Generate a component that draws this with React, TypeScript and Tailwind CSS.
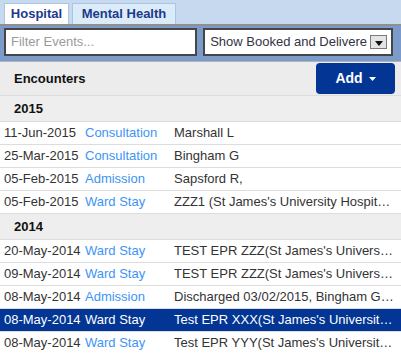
import React from 'react';

type Encounter = {
  date: string;
  type: string;
  detail: string;
  selected?: boolean;
};

const groups: { year: string; rows: Encounter[] }[] = [
  {
    year: '2015',
    rows: [
      { date: '11-Jun-2015', type: 'Consultation', detail: 'Marshall L' },
      { date: '25-Mar-2015', type: 'Consultation', detail: 'Bingham G' },
      { date: '05-Feb-2015', type: 'Admission', detail: 'Sapsford R,' },
      { date: '05-Feb-2015', type: 'Ward Stay', detail: "ZZZ1 (St James's University Hospital), Leeds Teaching Hospitals" },
    ],
  },
  {
    year: '2014',
    rows: [
      { date: '20-May-2014', type: 'Ward Stay', detail: "TEST EPR ZZZ(St James's University Hospital)" },
      { date: '09-May-2014', type: 'Ward Stay', detail: "TEST EPR ZZZ(St James's University Hospital)" },
      { date: '08-May-2014', type: 'Admission', detail: 'Discharged 03/02/2015, Bingham G, Leeds' },
      { date: '08-May-2014', type: 'Ward Stay', detail: "Test EPR XXX(St James's University Hospital)", selected: true },
      { date: '08-May-2014', type: 'Ward Stay', detail: "Test EPR YYY(St James's University Hospital)" },
    ],
  },
];

function Row({ row }: { row: Encounter }) {
  return (
    <div
      className={`grid h-[23px] grid-cols-[81px_89px_1fr] items-center border-b border-[#dddddd] pl-[4px] pr-[7px] text-[13px] ${
        row.selected ? 'bg-[#023594] text-white' : 'bg-white text-[#333333]'
      }`}
    >
      <span>{row.date}</span>
      <span className={row.selected ? 'text-white' : 'text-[#3d94f6]'}>{row.type}</span>
      <span className="truncate">{row.detail}</span>
    </div>
  );
}

export default function App() {
  return (
    <div className="h-[354px] w-[401px] overflow-hidden bg-white font-['Liberation_Sans',Arial,sans-serif]">
      <div className="flex h-[24px] items-end gap-[3px] bg-[#c7d9ee] pl-[4px]">
        <div className="flex h-[21px] w-[65px] items-center justify-center border border-b-0 border-[#a8c5ea] bg-white text-[13px] font-bold text-[#1b3a8c]">
          Hospital
        </div>
        <div className="flex h-[21px] w-[104px] items-center justify-center border border-b-0 border-[#a8c5ea] bg-[#dcebf8] text-[13px] font-bold text-[#1b3a8c]">
          Mental Health
        </div>
      </div>

      <div className="flex h-[37px] gap-[6px] border-t-2 border-[#8f8f8f] bg-[#7b9bcb] px-[4px] pt-[2px]">
        <div className="flex h-[28px] w-[193px] items-center border-2 border-[#464646] bg-white pl-[5px] text-[13px] text-[#9a9a9a]">
          Filter Events...
        </div>
        <div className="flex h-[28px] w-[190px] items-center justify-end gap-[3px] overflow-hidden border-2 border-[#464646] bg-white pr-[4px] text-[13px] text-[#333344]">
          <span className="whitespace-nowrap">Show Booked and Delivere</span>
          <span className="flex h-[14px] w-[17px] shrink-0 items-center justify-center border border-[#7a7a7a] bg-[#e4e4e4]">
            <svg width="8" height="5" viewBox="0 0 8 5" className="mt-[2px]">
              <path d="M0 0h8L4 5z" fill="#111" />
            </svg>
          </span>
        </div>
      </div>

      <div className="flex h-[35px] items-center justify-between border-t border-b border-t-[#b3b3b3] border-b-[#dcdcdc] bg-[#ececec] pl-[14px] pr-[6px]">
        <span className="text-[13px] font-bold text-[#111111]">Encounters</span>
        <button className="flex h-[31px] w-[79px] items-center justify-center gap-[6px] rounded-[4px] bg-[#023594] text-[14px] font-bold text-white">
          Add
          <svg width="7" height="4" viewBox="0 0 7 4">
            <path d="M0 0h7L3.5 4z" fill="#fff" />
          </svg>
        </button>
      </div>

      {groups.map((group) => (
        <div key={group.year}>
          <div className="flex h-[26px] items-center border-b border-[#dddddd] bg-[#eeeeee] pl-[14px] text-[13px] font-bold text-[#111111]">
            {group.year}
          </div>
          {group.rows.map((row, i) => (
            <Row key={i} row={row} />
          ))}
        </div>
      ))}
    </div>
  );
}
